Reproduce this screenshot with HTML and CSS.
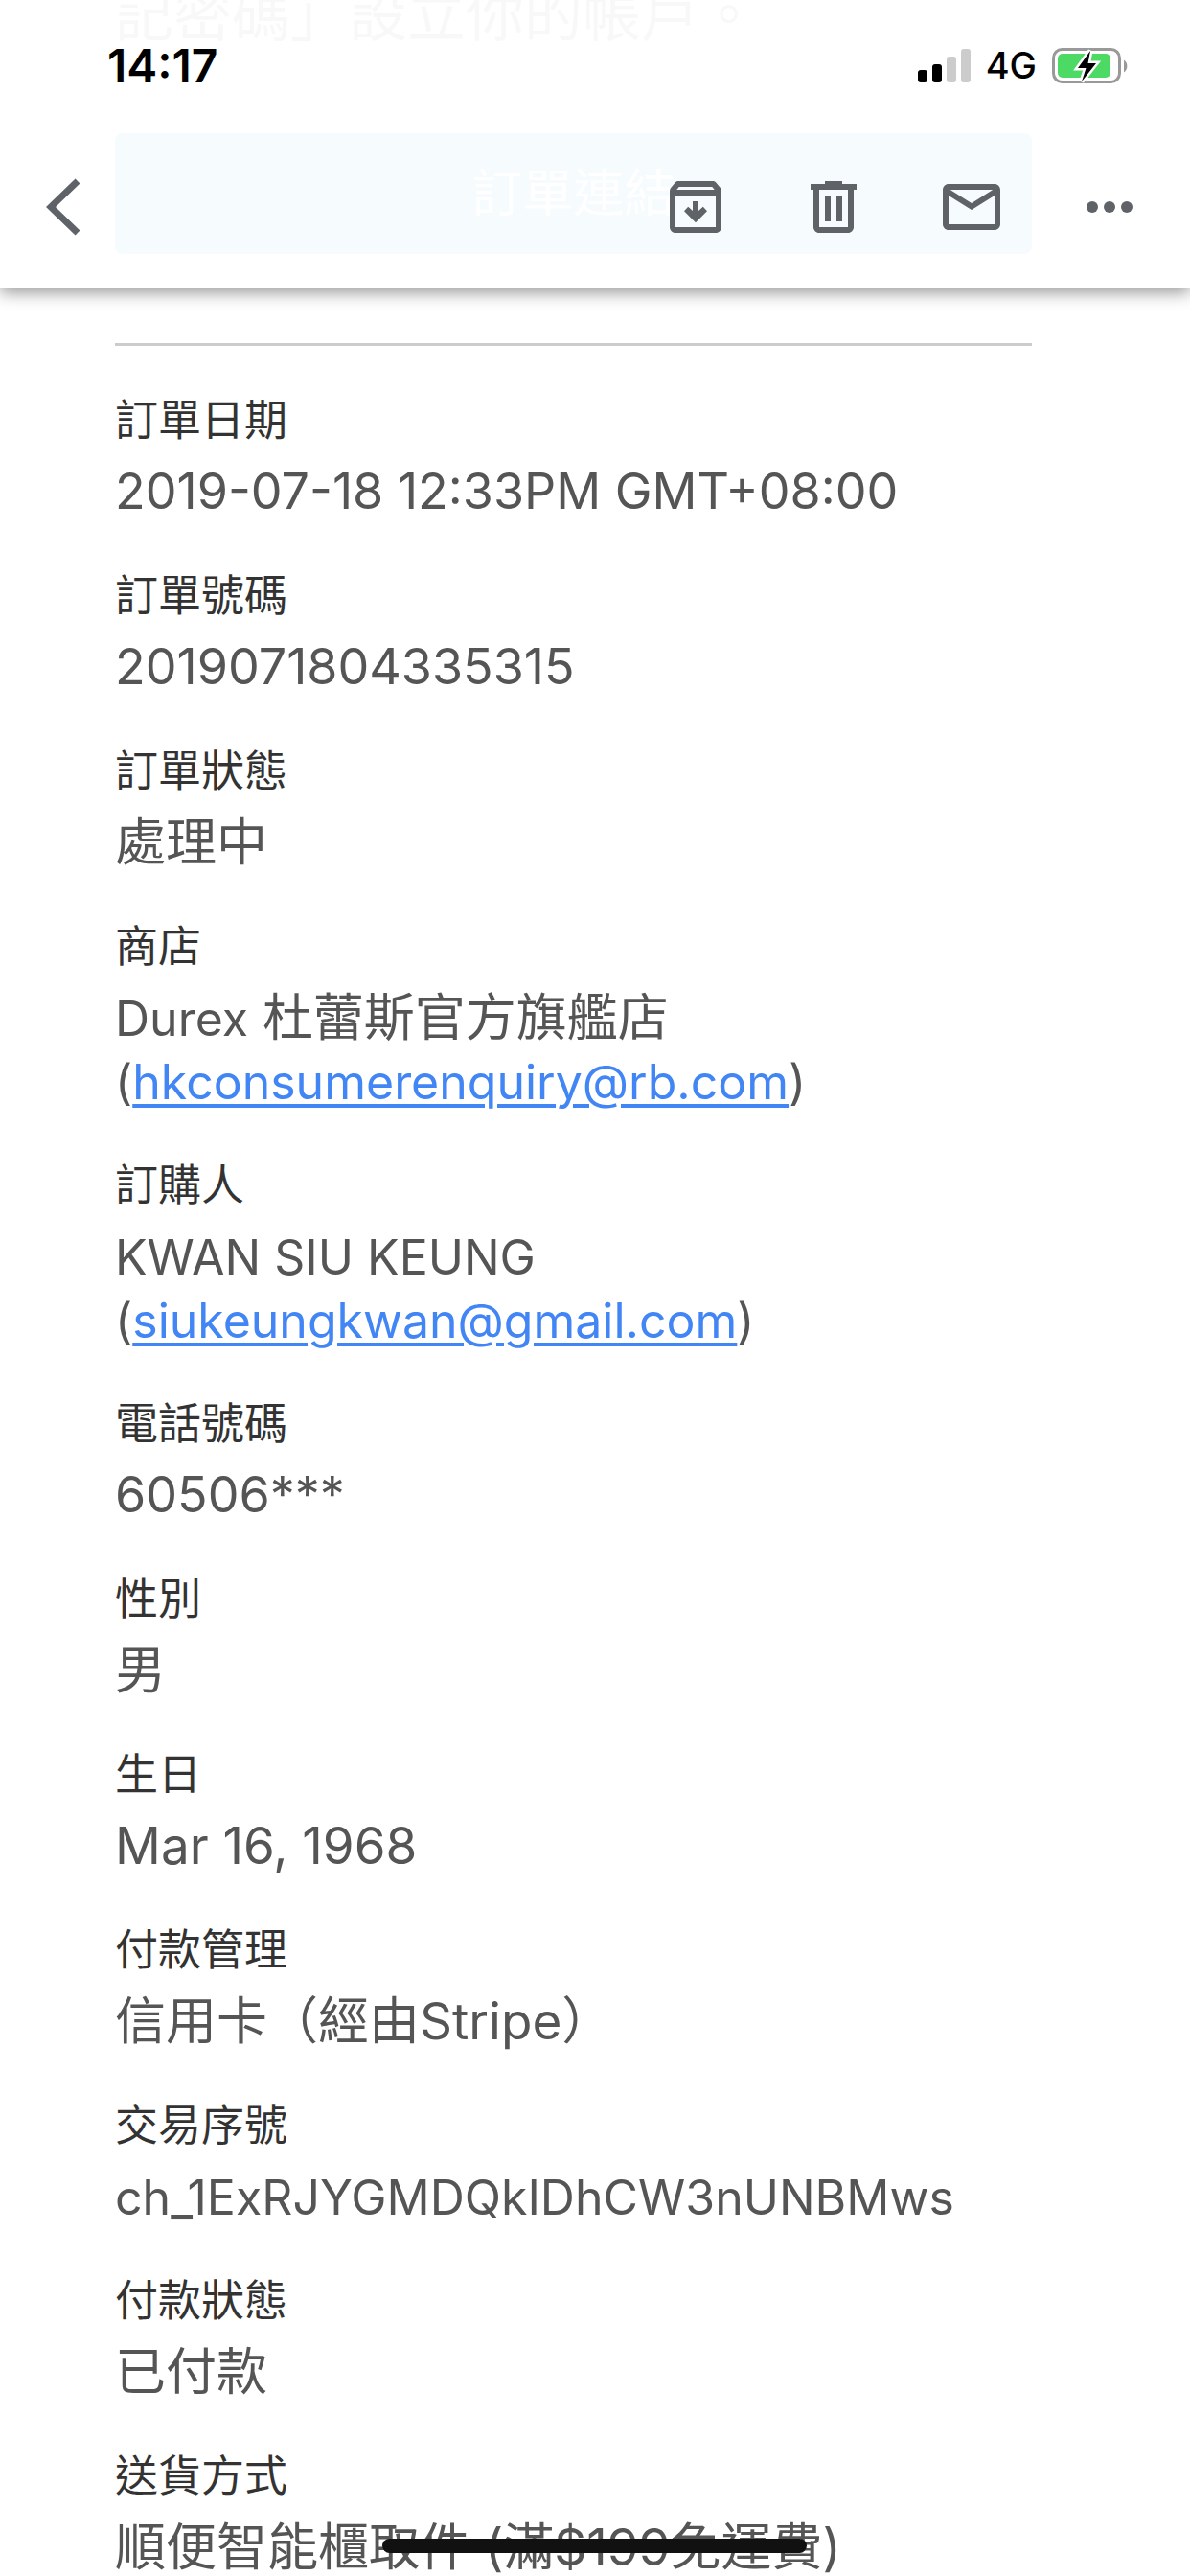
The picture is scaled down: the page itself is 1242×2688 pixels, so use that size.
FILE: index.html
```html
<!DOCTYPE html>
<html lang="zh-Hant">
<head>
<meta charset="utf-8">
<meta name="viewport" content="width=device-width">
<title>訂單</title>
<link rel="stylesheet" href="styles.css">
</head>
<body>
<div class="app">
  <header class="header">
    <div class="status">
      <time class="clock">14:17</time>
      <div class="indicators">
        <svg class="signal" viewBox="0 0 55 35" aria-hidden="true">
          <rect x="0" y="22" width="10" height="13" rx="3"/>
          <rect x="15" y="16" width="10" height="19" rx="3"/>
          <rect x="30" y="8" width="10" height="27" rx="3" fill="#ccc"/>
          <rect x="45" y="0" width="10" height="35" rx="3" fill="#ccc"/>
        </svg>
        <span class="network">4G</span>
        <svg class="battery" viewBox="0 0 80 37" aria-hidden="true">
          <rect x="1.5" y="1.5" width="69" height="34" rx="9" fill="none" stroke="#999" stroke-width="3"/>
          <path d="M75 12.500a8 8 0 0 1 0 13z" fill="#999"/>
          <rect x="6" y="6" width="55" height="25" rx="5" fill="#4cd964"/>
          <path d="M40 3L27 21H35.500L31 35L46 16H37.500z" fill="#000" stroke="#fff" stroke-width="5" paint-order="stroke"/>
        </svg>
      </div>
    </div>
    <nav class="toolbar">
      <button class="tool back" aria-label="返回">
        <svg viewBox="0 0 72 72"><path d="M33 9L5 36l28 27" fill="none" stroke="#5f6368" stroke-width="7"/></svg>
      </button>
      <div class="actions">
        <button class="tool" aria-label="封存">
          <svg viewBox="0 0 24 24"><path d="M20.540 5.230l-1.390-1.680C18.880 3.210 18.470 3 18 3H6c-.47 0-.88.21-1.160.55L3.460 5.230C3.170 5.570 3 6.020 3 6.500V19c0 1.100.9 2 2 2h14c1.100 0 2-.9 2-2V6.500c0-.48-.17-.93-.46-1.270zM6.240 5h11.520l.83 1H5.420l.82-1zM5 19V8h14v11H5zM13 10h-2v3.300l-1.600-1.400L8 13.400l4 4 4-4-1.400-1.500-1.600 1.400z"/></svg>
        </button>
        <button class="tool" aria-label="刪除">
          <svg viewBox="0 0 24 24"><path d="M15 4V3H9v1H4v2h1v13c0 1.100.9 2 2 2h10c1.100 0 2-.9 2-2V6h1V4h-5zm2 15H7V6h10v13zM9 8h2v9H9zm4 0h2v9h-2z"/></svg>
        </button>
        <button class="tool" aria-label="標示為未讀">
          <svg viewBox="0 0 24 24"><path d="M20 4H4c-1.100 0-2 .9-2 2v12c0 1.100.9 2 2 2h16c1.100 0 2-.9 2-2V6c0-1.100-.9-2-2-2zm-.6 2L12 10.700 4.600 6h14.800zM4 18V8l8 5 8-5v10H4z"/></svg>
        </button>
        <button class="tool" aria-label="更多">
          <svg viewBox="0 0 24 24"><circle cx="6" cy="12" r="2"/><circle cx="12" cy="12" r="2"/><circle cx="18" cy="12" r="2"/></svg>
        </button>
      </div>
    </nav>
  </header>
  <main class="mail">
    <p class="intro">記密碼」設立你的帳戶。</p>
    <a class="order-link" href="#order">訂單連結</a>
    <hr class="rule">
    <dl class="details" id="order">
      <div><dt>訂單日期</dt><dd class="number">2019-07-18 12:33PM GMT+08:00</dd></div>
      <div><dt>訂單號碼</dt><dd class="number">2019071804335315</dd></div>
      <div><dt>訂單狀態</dt><dd>處理中</dd></div>
      <div><dt>商店</dt><dd><span class="latin">Durex</span> 杜蕾斯官方旗艦店<br><span class="latin">(<a href="mailto:hkconsumerenquiry@rb.com">hkconsumerenquiry@rb.com</a>)</span></dd></div>
      <div><dt>訂購人</dt><dd><span class="latin">KWAN SIU KEUNG</span><br><span class="latin">(<a href="mailto:siukeungkwan@gmail.com">siukeungkwan@gmail.com</a>)</span></dd></div>
      <div><dt>電話號碼</dt><dd class="number">60506***</dd></div>
      <div><dt>性別</dt><dd>男</dd></div>
      <div><dt>生日</dt><dd>Mar 16, 1968</dd></div>
      <div><dt>付款管理</dt><dd>信用卡（經由Stripe）</dd></div>
      <div><dt>交易序號</dt><dd><span class="latin">ch_1ExRJYGMDQkIDhCW3nUNBMws</span></dd></div>
      <div><dt>付款狀態</dt><dd>已付款</dd></div>
      <div><dt>送貨方式</dt><dd>順便智能櫃取件 (滿$199免運費)</dd></div>
    </dl>
  </main>
  <div class="home-indicator"></div>
</div>
</body>
</html>
```
FILE: styles.css
```css
* {
  box-sizing: border-box;
}

body {
  margin: 0;
  background: #fff;
  color: #555;
  font-family: Inter, "Noto Sans CJK TC", sans-serif;
}

.app {
  position: relative;
  height: 100vh;
  overflow: hidden;
}

/* Translucent bar that floats over the scrolled message */
.header {
  position: absolute;
  top: 0;
  left: 0;
  right: 0;
  z-index: 1;
  height: 300px;
  background: rgba(255, 255, 255, 0.96);
  box-shadow: 0 5px 16px rgba(0, 0, 0, 0.42);
}

.status {
  display: flex;
  justify-content: space-between;
  align-items: center;
  height: 136px;
  padding: 0 64px 0 112px;
  color: #000;
}

.clock {
  font-size: 48px;
  font-weight: 600;
}

.indicators {
  display: flex;
  align-items: center;
}

.signal {
  width: 55px;
  height: 35px;
  margin-right: 16px;
}

.network {
  margin-right: 16px;
  font-size: 38px;
  font-weight: 500;
}

.battery {
  width: 80px;
  height: 37px;
}

.toolbar {
  display: flex;
  justify-content: space-between;
  align-items: center;
  height: 160px;
  padding: 0 48px;
}

.actions {
  display: flex;
  gap: 72px;
}

.tool {
  width: 72px;
  height: 72px;
  padding: 0;
  border: 0;
  background: none;
}

.tool svg {
  display: block;
  width: 100%;
  height: 100%;
  fill: #5f6368;
}

.mail {
  height: 100%;
  padding: 0 165px 0 120px;
  overflow: hidden;
}

.intro {
  margin: 0;
  height: 139px;
  font-size: 61px;
  line-height: 32px;
}

.order-link {
  display: block;
  border-radius: 8px;
  background: #1e8ccd;
  color: #fff;
  font-size: 53px;
  line-height: 126px;
  text-align: center;
  text-decoration: none;
}

.rule {
  height: 3px;
  margin: 93px 0 45px;
  border: 0;
  background: #ccc;
}

.details {
  display: grid;
  gap: 43px;
  margin: 0;
}

dt {
  margin-bottom: 8px;
  color: #333;
  font-size: 45px;
  line-height: 66px;
}

dd {
  margin: 0;
  font-size: 53px;
  line-height: 66px;
}

.number {
  font-size: 52px;
}

.latin {
  font-size: 50px;
  line-height: 1;
}

dd a {
  color: #4285f4;
  text-decoration-thickness: 4px;
  text-underline-offset: 5px;
}

.home-indicator {
  position: absolute;
  bottom: 24px;
  left: 50%;
  z-index: 2;
  width: 443px;
  height: 15px;
  margin-left: -222px;
  border-radius: 8px;
  background: #111;
}
```
